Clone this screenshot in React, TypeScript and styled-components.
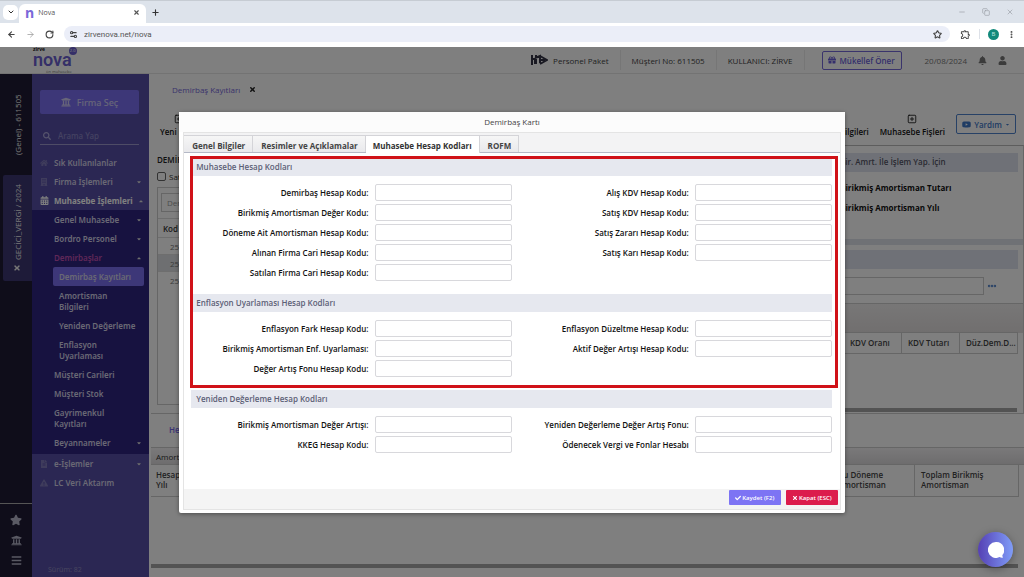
import React from 'react';
import styled, { createGlobalStyle, css } from 'styled-components';
import {
  FaUniversity, FaSearch, FaHome, FaBuilding, FaCalendarAlt, FaStar, FaBars, FaTimes,
  FaCheck, FaGift, FaBell, FaUser, FaYoutube, FaFileAlt, FaCaretDown, FaCaretUp, FaExclamationTriangle,
} from 'react-icons/fa';
import { MdOutlineExtension } from 'react-icons/md';
import {
  ArrowLeft, ArrowRight, RotateCw, X, Plus, ChevronDown, Star, MoreVertical,
  Minus, SquarePlus, Settings2, Copy, Ellipsis,
} from 'lucide-react';

const Global = createGlobalStyle`
  * { box-sizing: border-box; }
  html, body, #root { height: 100%; }
  body { margin: 0; overflow: hidden; font-family: "Open Sans", "Noto Sans", sans-serif; font-size: 8px; color: #333; }
  button, input { font: inherit; color: inherit; margin: 0; }
  button { border: 0; padding: 0; background: none; cursor: pointer; }
  svg { display: block; flex: none; }
  ul { list-style: none; margin: 0; padding: 0; }
  h1, h2 { margin: 0; font-size: inherit; font-weight: inherit; }
  a { color: inherit; text-decoration: none; }
`;

const Page = styled.div`
  display: flex;
  flex-direction: column;
  height: 100vh;
`;

/* ---------- browser frame ---------- */
const TabStrip = styled.div`
  display: flex;
  align-items: center;
  height: 23px;
  padding: 0 10px 0 3px;
  background: #dde3eb;
  border-top: 1px solid #c6ccd3;
`;
const TabMenu = styled.button`
  display: grid;
  place-items: center;
  width: 15px;
  height: 15px;
  border-radius: 5px;
  background: #fff;
`;
const BrowserTab = styled.div`
  display: flex;
  align-items: center;
  align-self: flex-end;
  gap: 4px;
  width: 127px;
  height: 19px;
  margin: 0 5px 0 1px;
  padding: 0 6px 2px 6px;
  border-radius: 6px 6px 0 0;
  background: #fff;
  color: #555;
  font-size: 7px;
`;
const Favicon = styled.span`
  color: #7a68d8;
  font-size: 14px;
  line-height: 14px;
  font-weight: 700;
`;
const Spacer = styled.span`
  flex: 1;
`;
const WindowButtons = styled.div`
  display: flex;
  gap: 16px;
  color: #9a9fa6;
`;
const AddressRow = styled.div`
  display: flex;
  align-items: center;
  gap: 10px;
  height: 24px;
  padding: 0 8px 2px 7px;
  background: #fff;
  color: #444;
`;
const Omnibox = styled.label`
  display: flex;
  flex: 1;
  align-items: center;
  gap: 6px;
  height: 16px;
  padding: 0 8px 0 5px;
  border-radius: 8px;
  background: #ebeef8;
`;
const UrlInput = styled.input`
  flex: 1;
  border: 0;
  padding: 0;
  outline: 0;
  background: transparent;
  color: #555;
  font-family: Roboto, "Open Sans", sans-serif;
  font-size: 8px;
`;
const BrowserTools = styled.div`
  display: flex;
  align-items: center;
  gap: 8px;
`;
const Avatar = styled.span`
  display: grid;
  place-items: center;
  width: 11px;
  height: 11px;
  border-radius: 50%;
  background: #12897b;
  color: #bfe6e0;
  font-size: 6px;
`;
const ThinRule = styled.span`
  width: 1px;
  height: 10px;
  background: #dde1e8;
`;

/* ---------- application ---------- */
const Application = styled.div`
  position: relative;
  display: flex;
  flex: 1;
  flex-direction: column;
  min-height: 0;
  background: #fff;
`;
const Header = styled.header`
  display: flex;
  align-items: center;
  height: 27px;
  padding: 0 17px 0 33px;
  border-bottom: 1px solid #e6e6e6;
`;
const Logo = styled.a`
  display: grid;
  grid-template-columns: auto auto;
  grid-template-rows: 4px 18px 4px;
  color: #6a5fd0;
`;
const LogoWord = styled.span`
  font-family: Roboto, sans-serif;
  font-size: 18px;
  line-height: 17px;
  font-weight: 600;
`;
const LogoNote = styled.span<{ $bottom?: boolean }>`
  ${(p) => (p.$bottom ? 'justify-self: end; color: #777; font-size: 4px; line-height: 6px;' : 'color: #111; font-size: 5px; line-height: 5px; font-weight: 700;')}
`;
const LogoBadge = styled.span`
  grid-column: 2;
  grid-row: 1;
  width: 8px;
  height: 8px;
  margin-left: -3px;
  border-radius: 50%;
  background: #6a5fd0;
  color: #fff;
  font-size: 4px;
  line-height: 8px;
  text-align: center;
`;
const HeaderCell = styled.div`
  display: flex;
  align-items: center;
  gap: 5px;
  height: 20px;
  padding: 0 11px;
  border-right: 1px solid #ececec;
  color: #444;
`;
const OutlineButton = styled.button<{ $blue?: boolean }>`
  display: flex;
  align-items: center;
  justify-content: center;
  gap: 3px;
  height: ${(p) => (p.$blue ? 20 : 19)}px;
  width: ${(p) => (p.$blue ? 60 : 80)}px;
  margin-left: ${(p) => (p.$blue ? 0 : 17)}px;
  border: 1px solid ${(p) => (p.$blue ? '#4f82cc' : '#7468d8')};
  border-radius: 2px;
  color: ${(p) => (p.$blue ? '#3f78c8' : '#6a5fd8')};
  font-weight: 600;
`;
const HeaderEnd = styled.div`
  display: flex;
  align-items: center;
  gap: 11px;
  margin-left: 23px;
  color: #777;
`;
const Workspace = styled.div`
  display: flex;
  flex: 1;
  min-height: 0;
`;

/* narrow company rail */
const Rail = styled.aside`
  display: flex;
  flex-direction: column;
  width: 32px;
  background: #1e1a34;
  color: #eee;
`;
const RailTab = styled.button<{ $active?: boolean }>`
  display: flex;
  align-items: center;
  justify-content: center;
  gap: 4px;
  height: ${(p) => (p.$active ? 106 : 101)}px;
  margin-left: 3px;
  writing-mode: vertical-rl;
  transform: rotate(180deg);
  border-radius: 0 2px 2px 0;
  background: ${(p) => (p.$active ? '#3c3672' : 'transparent')};
`;
const RailTools = styled.div`
  display: flex;
  flex-direction: column;
  align-items: center;
  gap: 9px;
  margin-top: auto;
  padding: 10px 0 11px;
  border-top: 1px solid #aaa;
  color: #b4b4c8;
`;

/* sidebar */
const Sidebar = styled.nav`
  display: flex;
  flex-direction: column;
  width: 117px;
  background: #564fa6;
  color: #d4d2e8;
  font-family: "Noto Sans", "Open Sans", sans-serif;
  font-weight: 600;
`;
const CompanyButton = styled.button`
  display: flex;
  align-items: center;
  justify-content: center;
  gap: 6px;
  height: 24px;
  margin: 16px 10px 0 8px;
  border-radius: 2px;
  background: #7a6ff0;
  color: #cfcbf2;
  font-size: 9px;
  font-weight: 500;
`;
const SearchLine = styled.label`
  display: flex;
  align-items: center;
  gap: 7px;
  height: 18px;
  margin: 13px 10px 8px 8px;
  padding-left: 3px;
  border-bottom: 1px solid #9d99cc;
  color: #aaa6d8;
  font-weight: 500;
`;
const SearchInput = styled.input`
  flex: 1;
  width: 0;
  border: 0;
  padding: 0;
  outline: 0;
  background: transparent;
  &::placeholder { color: #8a85c4; opacity: 1; }
`;
const MenuLink = styled.a<{ $level: 0 | 1 | 2; $tone?: 'open' | 'pink' | 'active' }>`
  display: flex;
  align-items: center;
  gap: 6px;
  padding: 4px 7px 4px 8px;
  line-height: 11px;
  ${(p) => p.$level === 1 && css`padding-left: 22px;`}
  ${(p) => p.$level === 2 && css`padding-left: 27px;`}
  ${(p) => p.$tone === 'open' && css`font-weight: 700; color: #fff; gap: 5px;`}
  ${(p) => p.$tone === 'pink' && css`color: #c050b0;`}
  ${(p) => p.$tone === 'active' && css`margin: 0 5px 0 21px; padding-left: 6px; padding-right: 0; border-radius: 2px; background: #7a6ff0;`}
`;
const MenuText = styled.span`
  flex: 1;
  white-space: nowrap;
`;
const SubMenu = styled.ul`
  padding: 0 0 2px;
  background: #2e2480;
`;
const Version = styled.p`
  margin: auto 0 2px 16px;
  line-height: 10px;
  font-size: 7px;
  font-weight: 400;
  color: #8f8abf;
`;

/* main area */
const Main = styled.main`
  display: flex;
  flex: 1;
  flex-direction: column;
  min-width: 0;
  padding-left: 2px;
`;
const PageTabs = styled.div`
  display: flex;
  align-items: center;
  gap: 9px;
  height: 31px;
  padding-left: 21px;
  color: #7466d8;
`;
const ActionBar = styled.div`
  display: flex;
  align-items: flex-start;
  justify-content: flex-end;
  gap: 11px;
  height: 40px;
  padding: 9px 8px 0 9px;
`;
const Action = styled.button<{ $first?: boolean }>`
  display: flex;
  flex-direction: column;
  align-items: center;
  gap: 2px;
  min-height: 23px;
  justify-content: flex-end;
  margin-right: ${(p) => (p.$first ? 'auto' : '0')};
  color: #111;
  font-weight: 600;
  line-height: 11px;
`;
const Split = styled.div`
  display: flex;
  height: 269px;
  border-bottom: 1px solid #ccc;
`;
const ListPane = styled.section`
  display: flex;
  flex: 1;
  flex-direction: column;
  padding: 9px 6px 8px;
`;
const ListTitle = styled.h2`
  font-weight: 600;
  line-height: 12px;
  color: #222;
`;
const CheckLine = styled.label`
  display: flex;
  align-items: center;
  gap: 3px;
  height: 20px;
  margin-bottom: 1px;
`;
const CheckBox = styled.input`
  appearance: none;
  width: 9px;
  height: 9px;
  border: 1px solid #666;
  border-radius: 2px;
`;
const ListFrame = styled.div`
  flex: 1;
  border: 1px solid #ccc;
`;
const Filter = styled.input`
  display: block;
  width: 180px;
  height: 19px;
  margin: 5px 3px 6px;
  padding: 0 5px;
  border: 1px solid #ccc;
  background: #fff;
  &::placeholder { color: #999; opacity: 1; }
`;
const CodeTable = styled.table`
  width: 100%;
  border-collapse: collapse;
  border-top: 1px solid #ddd;
  th { height: 19px; padding: 0 5px; text-align: left; font-weight: 600; }
  td { height: 17px; padding: 0 12px; border-top: 1px solid #ddd; color: #777; }
  tr.selected td { background: #dcdfe2; }
`;
const DetailPane = styled.section`
  width: 195px;
  padding: 7px 5px 0;
  border-top: 1px solid #bbb;
  border-right: 1px solid #ccc;
`;
const Band = styled.div`
  height: 19px;
  padding: 0 6px;
  background: #dfe3ee;
  color: #556;
  line-height: 17px;
  font-weight: 600;
`;
const DetailFields = styled.div`
  display: flex;
  flex-direction: column;
  align-items: flex-start;
  height: 67px;
  padding: 6px 0 0 6px;
  line-height: 20px;
  font-weight: 700;
  color: #111;
`;
const Divider = styled.div`
  height: 6px;
  margin: 0 -5px 5px;
  background: #dfe3ea;
`;
const Lookup = styled.div`
  display: flex;
  align-items: center;
  gap: 3px;
  padding: 8px 21px 0 0;
  color: #4f82cc;
`;
const LookupInput = styled.input`
  flex: 1;
  min-width: 0;
  height: 18px;
  border: 1px solid #ccc;
  background: #fff;
`;
const Lower = styled.div`
  display: flex;
  flex: 1;
  flex-direction: column;
`;
const LinkRow = styled.div`
  height: 33px;
  padding: 10px 18px;
  line-height: 12px;
  font-weight: 600;
  color: #7466e8;
`;
const GridTitle = styled.div`
  height: 18px;
  padding: 0 5px;
  border: solid #ccc;
  border-width: 1px 0;
  background: linear-gradient(#f4f2f4, #dcdadc);
  line-height: 17px;
`;
const GridFrame = styled.div`
  margin-right: 5px;
`;
const GridTable = styled.table`
  width: 100%;
  border-collapse: collapse;
  th {
    height: 31px;
    padding: 0 6px;
    border: solid #ccc;
    border-width: 0 1px 1px 0;
    text-align: left;
    line-height: 10px;
    font-weight: 600;
    color: #444;
  }
  th:first-child { padding-left: 5px; }
`;
const NarrowHead = styled.th`
  width: 58px;
  white-space: nowrap;
`;
const WideHead = styled.th<{ $short?: boolean }>`
  width: ${(p) => (p.$short ? 83 : 104)}px;
`;
const ScrollBar = styled.div`
  height: 4px;
  margin: auto 6px 9px 0;
  background: #a6a6a6;
`;
const PriceGrid = styled.div`
  margin: 8px -5px 0;
  border-top: 1px solid #ccc;
  background: linear-gradient(#f0eeee, #e2dede 29px, #fff 29px);
  padding-top: 28px;
  th { height: 21px; padding: 0 1px 0 6px; background: #fff; border-top-width: 1px; }
`;
const PriceScroll = styled.div`
  height: 4px;
  margin: 54px 6px 0 0;
  background: #a6a6a6;
`;

/* ---------- dialog ---------- */
const Backdrop = styled.div`
  position: absolute;
  inset: 0;
  display: flex;
  align-items: center;
  justify-content: center;
  background: rgba(0, 0, 0, 0.5);
`;
const Dialog = styled.section`
  display: flex;
  flex-direction: column;
  width: 65%;
  padding: 0 4px 3px;
  border-radius: 2px;
  background: #fff;
  box-shadow: 0 1px 4px rgba(0, 0, 0, 0.4);
`;
const DialogTitle = styled.h1`
  height: 20px;
  margin: 0 -4px;
  background: #fcfcfc;
  line-height: 20px;
  text-align: center;
  color: #444;
`;
const DialogPanel = styled.div`
  border: 1px solid #e4e4e4;
  background: #fff;
`;
const Tabs = styled.div`
  display: flex;
  align-items: flex-end;
  height: 20px;
  padding-top: 2px;
  border-bottom: 1px solid #b4b8c6;
  background: #f3f3f4;
`;
const Tab = styled.button<{ $active?: boolean }>`
  height: ${(p) => (p.$active ? 18 : 17)}px;
  margin-bottom: ${(p) => (p.$active ? -1 : 0)}px;
  padding: ${(p) => (p.$active ? '3px 7px 0' : '4px 7px 0 8px')};
  border: solid #d4d4d8;
  border-width: 1px 1px 0 0;
  background: ${(p) => (p.$active ? '#fff' : 'linear-gradient(#f6f6f6, #e9e9ec)')};
  color: ${(p) => (p.$active ? '#333' : '#444')};
  line-height: 12px;
  font-weight: 700;
`;
const TabBody = styled.form`
  padding: 5px 8px 0 7px;
`;
const Highlighted = styled.div`
  position: relative;
`;
const HighlightFrame = styled.div`
  position: absolute;
  inset: -2px -6px 2px -1px;
  border: 3px solid #d01218;
  pointer-events: none;
`;
const SectionTitle = styled.h2`
  height: 18px;
  padding: 0 5px;
  background: #e6e8ef;
  color: #5c6076;
  line-height: 18px;
  font-weight: 600;
`;
const SectionGrid = styled.div`
  display: grid;
  grid-template-columns: 1fr 1fr;
  padding: 8px 0 12px;
`;
const FieldColumn = styled.div`
  display: flex;
  flex-direction: column;
  gap: 2px;
`;
const Field = styled.label`
  display: flex;
  align-items: center;
  justify-content: flex-end;
  gap: 6px;
  height: 18px;
  color: #111;
  font-weight: 600;
`;
const FieldInput = styled.input`
  width: 137px;
  height: 17px;
  padding: 0 4px;
  border: 1px solid #d8d8dc;
  border-radius: 2px;
  background: #fff;
`;
const DialogFooter = styled.footer`
  display: flex;
  align-items: center;
  justify-content: flex-end;
  gap: 5px;
  height: 20px;
  margin-top: 23px;
  padding: 0 2px 2px;
  background: #f4f4f4;
`;
const FooterButton = styled.button<{ $danger?: boolean }>`
  display: flex;
  align-items: center;
  justify-content: center;
  gap: 1px;
  width: 52px;
  height: 15px;
  border-radius: 1px;
  background: ${(p) => (p.$danger ? '#dc1c4c' : '#7d74f4')};
  color: #fff;
  font-size: 6px;
  font-weight: 600;
`;
const ChatButton = styled.button`
  position: absolute;
  right: 11px;
  bottom: 10px;
  display: grid;
  place-items: center;
  width: 35px;
  height: 35px;
  border-radius: 50%;
  background: linear-gradient(90deg, #5540b4, #7f9cf8);
  box-shadow: 0 2px 8px rgba(0, 0, 0, 0.35);
`;

type MenuItem = {
  label: React.ReactNode;
  level: 0 | 1 | 2;
  tone?: 'open' | 'pink' | 'active';
  caret?: 'up' | 'down';
  icon?: React.ReactNode;
};

const topItems: MenuItem[] = [
  { label: 'Sık Kullanılanlar', level: 0, icon: <FaHome size={8} color="#7f79b8" /> },
  { label: 'Firma İşlemleri', level: 0, caret: 'down', icon: <FaBuilding size={8} color="#7f79b8" /> },
  { label: 'Muhasebe İşlemleri', level: 0, tone: 'open', caret: 'up', icon: <FaCalendarAlt size={9} /> },
];
const subItems: MenuItem[] = [
  { label: 'Genel Muhasebe', level: 1, caret: 'down' },
  { label: 'Bordro Personel', level: 1, caret: 'down' },
  { label: 'Demirbaşlar', level: 1, tone: 'pink', caret: 'up' },
  { label: 'Demirbaş Kayıtları', level: 2, tone: 'active' },
  { label: <>Amortisman<br />Bilgileri</>, level: 2 },
  { label: 'Yeniden Değerleme', level: 2 },
  { label: <>Enflasyon<br />Uyarlaması</>, level: 2 },
  { label: 'Müşteri Carileri', level: 1 },
  { label: 'Müşteri Stok', level: 1 },
  { label: <>Gayrimenkul<br />Kayıtları</>, level: 1 },
  { label: 'Beyannameler', level: 1, caret: 'down' },
];
const endItems: MenuItem[] = [
  { label: 'e-İşlemler', level: 0, caret: 'down', icon: <FaFileAlt size={8} color="#7f79b8" /> },
  { label: 'LC Veri Aktarım', level: 0, icon: <FaExclamationTriangle size={8} color="#7f79b8" /> },
];

function MenuRows({ items }: { items: MenuItem[] }) {
  return (
    <>
      {items.map((item, i) => (
        <li key={i}>
          <MenuLink href="#" $level={item.level} $tone={item.tone}>
            {item.icon}
            <MenuText>{item.label}</MenuText>
            {item.caret === 'down' && <FaCaretDown size={6} color="#ddd" />}
            {item.caret === 'up' && <FaCaretUp size={6} color="#ddd" />}
          </MenuLink>
        </li>
      ))}
    </>
  );
}

function FieldSection({ title, columns }: { title: string; columns: string[][] }) {
  return (
    <section>
      <SectionTitle>{title}</SectionTitle>
      <SectionGrid>
        {columns.map((labels, i) => (
          <FieldColumn key={i}>
            {labels.map((label) => (
              <Field key={label}>
                {label}
                <FieldInput type="text" />
              </Field>
            ))}
          </FieldColumn>
        ))}
      </SectionGrid>
    </section>
  );
}

function PackageMark() {
  return (
    <svg width="18" height="12" viewBox="0 0 18 12" fill="none" stroke="#334" strokeWidth="2">
      <path d="M2 1v10M1 5h4v5M6 1v9M5 4l5-2v7" />
      <path d="M10 2l7 4-7 4M10 6h5" />
    </svg>
  );
}

export default function App() {
  return (
    <Page>
      <Global />
      <TabStrip>
        <TabMenu aria-label="Sekme ara"><ChevronDown size={8} strokeWidth={3} /></TabMenu>
        <BrowserTab>
          <Favicon>n</Favicon>
          <span>Nova</span>
          <Spacer />
          <X size={7} strokeWidth={4} />
        </BrowserTab>
        <Plus size={9} strokeWidth={3} />
        <Spacer />
        <WindowButtons>
          <Minus size={8} /><Copy size={8} /><X size={8} />
        </WindowButtons>
      </TabStrip>
      <AddressRow>
        <ArrowLeft size={9} strokeWidth={3} />
        <ArrowRight size={9} strokeWidth={2} color="#999" />
        <RotateCw size={9} strokeWidth={3} />
        <Omnibox>
          <Settings2 size={9} strokeWidth={3} />
          <UrlInput aria-label="Adres" defaultValue="zirvenova.net/nova" />
          <Star size={9} strokeWidth={3} />
        </Omnibox>
        <BrowserTools>
          <MdOutlineExtension size={11} />
          <ThinRule />
          <Avatar>B</Avatar>
          <MoreVertical size={9} strokeWidth={3} />
        </BrowserTools>
      </AddressRow>

      <Application>
        <Header>
          <Logo href="#">
            <LogoNote>zirve</LogoNote>
            <LogoBadge>2.0</LogoBadge>
            <LogoWord>nova</LogoWord>
            <span />
            <LogoNote $bottom>ön muhasebe</LogoNote>
          </Logo>
          <Spacer />
          <HeaderCell><PackageMark />Personel Paket</HeaderCell>
          <HeaderCell>Müşteri No: 611505</HeaderCell>
          <HeaderCell>KULLANICI: ZİRVE</HeaderCell>
          <OutlineButton><FaGift size={8} />Mükellef Öner</OutlineButton>
          <HeaderEnd>
            20/08/2024
            <FaBell size={9} />
            <FaUser size={9} />
          </HeaderEnd>
        </Header>

        <Workspace>
          <Rail>
            <RailTab>(Genel) - 611505</RailTab>
            <RailTab $active><FaTimes size={8} />GECİCİ_VERGİ / 2024</RailTab>
            <RailTools>
              <FaStar size={12} />
              <FaUniversity size={11} />
              <FaBars size={11} />
            </RailTools>
          </Rail>

          <Sidebar>
            <CompanyButton><FaUniversity size={10} />Firma Seç</CompanyButton>
            <SearchLine>
              <FaSearch size={8} />
              <SearchInput aria-label="Arama" placeholder="Arama Yap" />
            </SearchLine>
            <ul><MenuRows items={topItems} /></ul>
            <SubMenu><MenuRows items={subItems} /></SubMenu>
            <ul><MenuRows items={endItems} /></ul>
            <Version>Sürüm: 82</Version>
          </Sidebar>

          <Main>
            <PageTabs>Demirbaş Kayıtları<X size={7} strokeWidth={5} color="#222" /></PageTabs>
            <ActionBar>
              <Action $first><SquarePlus size={10} />Yeni Kayıt</Action>
              <Action>Bilgileri</Action>
              <Action><SquarePlus size={10} />Muhasebe Fişleri</Action>
              <OutlineButton $blue><FaYoutube size={9} />Yardım<FaCaretDown size={5} /></OutlineButton>
            </ActionBar>
            <Split>
              <ListPane>
                <ListTitle>DEMİRBAŞ</ListTitle>
                <CheckLine><CheckBox type="checkbox" />Satılan</CheckLine>
                <ListFrame>
                  <Filter aria-label="Demirbaş" placeholder="Demirbaş" />
                  <CodeTable>
                    <thead><tr><th>Kod</th></tr></thead>
                    <tbody>
                      <tr><td>253</td></tr>
                      <tr className="selected"><td>254</td></tr>
                      <tr><td>255</td></tr>
                    </tbody>
                  </CodeTable>
                </ListFrame>
              </ListPane>
              <DetailPane>
                <Band>Bir. Amrt. İle İşlem Yap. İçin</Band>
                <DetailFields>
                  <span>Birikmiş Amortisman Tutarı</span>
                  <span>Birikmiş Amortisman Yılı</span>
                </DetailFields>
                <Divider />
                <Band />
                <Lookup><LookupInput aria-label="Hesap" /><Ellipsis size={10} strokeWidth={4} /></Lookup>
                <PriceGrid>
                  <GridFrame>
                    <GridTable>
                      <thead>
                        <tr>
                          <th />
                          <NarrowHead>KDV Oranı</NarrowHead>
                          <NarrowHead>KDV Tutarı</NarrowHead>
                          <NarrowHead>Düz.Dem.D...</NarrowHead>
                        </tr>
                      </thead>
                    </GridTable>
                  </GridFrame>
                  <PriceScroll />
                </PriceGrid>
              </DetailPane>
            </Split>
            <Lower>
              <LinkRow>Hesap</LinkRow>
              <GridTitle>Amortisman</GridTitle>
              <GridFrame>
                <GridTable>
                  <thead>
                    <tr>
                      <th>Hesap<br />Yılı</th>
                      <WideHead $short>Bu Döneme<br />Amortisman</WideHead>
                      <WideHead>Toplam Birikmiş<br />Amortisman</WideHead>
                    </tr>
                  </thead>
                </GridTable>
              </GridFrame>
              <ScrollBar />
            </Lower>
          </Main>
        </Workspace>

        <Backdrop>
          <Dialog role="dialog" aria-labelledby="dialog-title">
            <DialogTitle id="dialog-title">Demirbaş Kartı</DialogTitle>
            <DialogPanel>
              <Tabs role="tablist">
                <Tab role="tab">Genel Bilgiler</Tab>
                <Tab role="tab">Resimler ve Açıklamalar</Tab>
                <Tab role="tab" $active aria-selected>Muhasebe Hesap Kodları</Tab>
                <Tab role="tab">ROFM</Tab>
              </Tabs>
              <TabBody>
                <Highlighted>
                  <FieldSection
                    title="Muhasebe Hesap Kodları"
                    columns={[
                      ['Demirbaş Hesap Kodu:', 'Birikmiş Amortisman Değer Kodu:', 'Döneme Ait Amortisman Hesap Kodu:', 'Alınan Firma Cari Hesap Kodu:', 'Satılan Firma Cari Hesap Kodu:'],
                      ['Alış KDV Hesap Kodu:', 'Satış KDV Hesap Kodu:', 'Satış Zararı Hesap Kodu:', 'Satış Karı Hesap Kodu:'],
                    ]}
                  />
                  <FieldSection
                    title="Enflasyon Uyarlaması Hesap Kodları"
                    columns={[
                      ['Enflasyon Fark Hesap Kodu:', 'Birikmiş Amortisman Enf. Uyarlaması:', 'Değer Artış Fonu Hesap Kodu:'],
                      ['Enflasyon Düzeltme Hesap Kodu:', 'Aktif Değer Artışı Hesap Kodu:'],
                    ]}
                  />
                  <HighlightFrame />
                </Highlighted>
                <FieldSection
                  title="Yeniden Değerleme Hesap Kodları"
                  columns={[
                    ['Birikmiş Amortisman Değer Artışı:', 'KKEG Hesap Kodu:'],
                    ['Yeniden Değerleme Değer Artış Fonu:', 'Ödenecek Vergi ve Fonlar Hesabı'],
                  ]}
                />
              </TabBody>
              <DialogFooter>
                <FooterButton type="button"><FaCheck size={6} />Kaydet (F2)</FooterButton>
                <FooterButton type="button" $danger><FaTimes size={6} />Kapat (ESC)</FooterButton>
              </DialogFooter>
            </DialogPanel>
          </Dialog>
        </Backdrop>

        <ChatButton aria-label="Sohbet">
          <svg width="16" height="16" viewBox="0 0 16 16" fill="#fff">
            <path d="M8 0a8 8 0 1 0 3.6 15.1c.9.5 2.2.8 3.6.5-.6-.7-.9-1.500-.8-2.500A8 8 0 0 0 8 0z" />
          </svg>
        </ChatButton>
      </Application>
    </Page>
  );
}
